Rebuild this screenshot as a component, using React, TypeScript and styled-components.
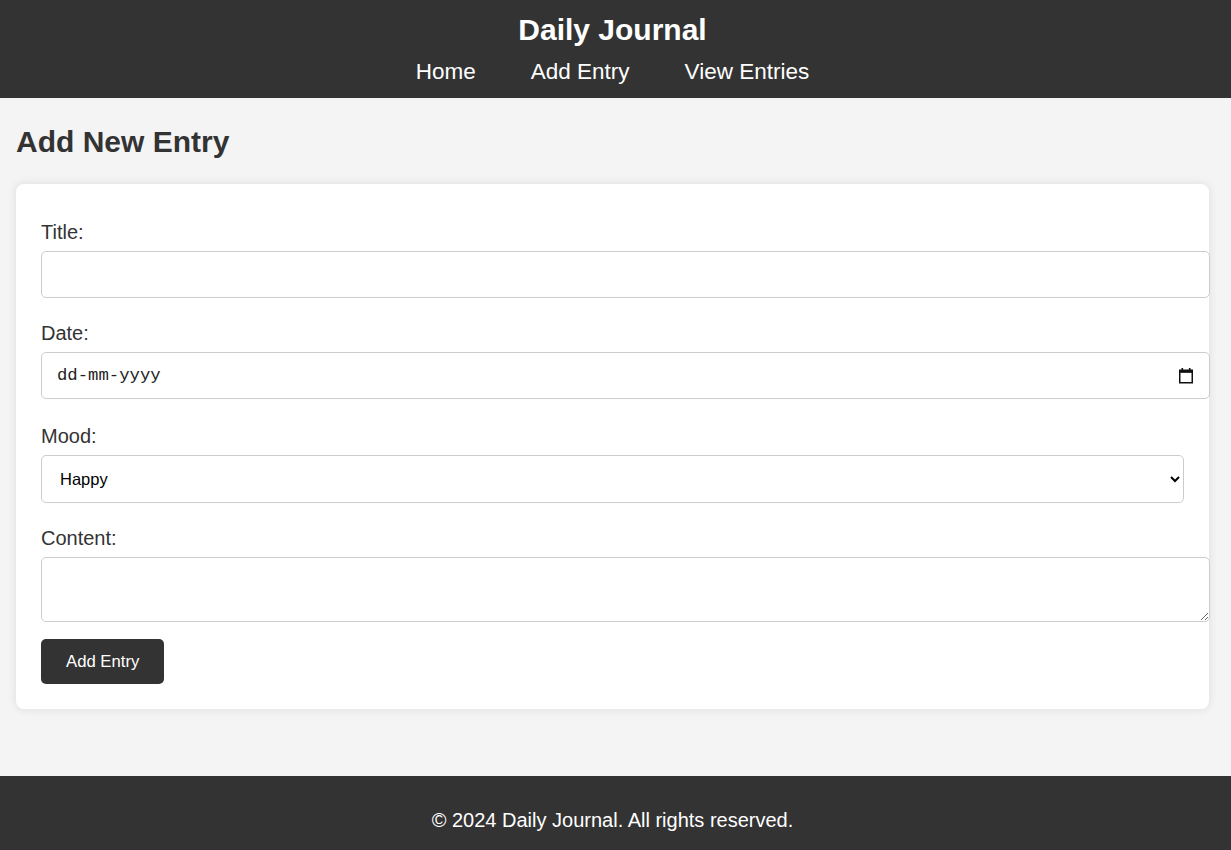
import * as React from 'react';
import styled, { createGlobalStyle } from 'styled-components';

const GlobalStyle = createGlobalStyle`
  body {
    margin: 0;
    background: #f4f4f4;
    font-family: "Liberation Sans", Arial, sans-serif;
    color: #333;
  }
`;

const Header = styled.header`
  background: #333;
  color: #fff;
  text-align: center;
  padding: 13px 6px 14px 0;
`;

const SiteTitle = styled.h1`
  margin: 0 0 12px;
  font-size: 30px;
  line-height: 34px;
  font-weight: bold;
`;

const Nav = styled.nav`
  display: flex;
  justify-content: center;
  gap: 55px;
`;

const NavLink = styled.a`
  color: #fff;
  text-decoration: none;
  font-size: 22.5px;
  line-height: 25px;
`;

const Main = styled.main`
  padding: 0 22px 67px 16px;
`;

const PageTitle = styled.h2`
  margin: 0;
  padding: 27px 0 25px;
  font-size: 30px;
  line-height: 34px;
  color: #333;
`;

const Card = styled.div`
  background: #fff;
  border-radius: 8px;
  box-shadow: 0 0 10px rgba(0, 0, 0, 0.1);
  padding: 37px 25px 25px;
`;

const Field = styled.div<{ $gap: number }>`
  margin-bottom: ${(p) => p.$gap}px;
`;

const Label = styled.label`
  display: block;
  font-size: 20px;
  line-height: 23px;
  color: #333;
  margin-bottom: 7px;
`;

const TextInput = styled.input`
  display: block;
  width: 100%;
  box-sizing: content-box;
  padding: 12px;
  height: 21px;
  border: 1px solid #ccc;
  border-radius: 5px;
  font-family: "Liberation Sans", Arial, sans-serif;
  font-size: 16.5px;
  margin: 0;
`;

const DateWrap = styled.div`
  position: relative;
  width: calc(100% + 26px);
`;

const DateInput = styled(TextInput)`
  width: calc(100% - 29px);
  padding-left: 15px;
  font-family: "Liberation Mono", "Courier New", monospace;
  font-size: 17.3px;
  &::placeholder {
    color: #222;
    opacity: 1;
  }
`;

const CalendarIcon = styled.svg`
  position: absolute;
  right: 17px;
  top: 16px;
`;

const Select = styled.select`
  display: block;
  width: 100%;
  height: 48px;
  padding: 0 12px 0 14px;
  border: 1px solid #ccc;
  border-radius: 5px;
  background: #fff;
  font-family: "Liberation Sans", Arial, sans-serif;
  font-size: 16.5px;
  color: #000;
`;

const TextArea = styled.textarea`
  display: block;
  width: 100%;
  box-sizing: content-box;
  height: 39px;
  padding: 12px;
  border: 1px solid #ccc;
  border-radius: 5px;
  font-family: "Liberation Sans", Arial, sans-serif;
  font-size: 16.5px;
  margin: 0;
`;

const Button = styled.button`
  background: #333;
  color: #fff;
  border: none;
  border-radius: 5px;
  padding: 0 25px;
  height: 45px;
  font-family: "Liberation Sans", Arial, sans-serif;
  font-size: 16.7px;
  cursor: pointer;
`;

const Footer = styled.footer`
  background: #333;
  color: #fff;
  text-align: center;
  padding: 33px 6px 19px 0;
  font-size: 20px;
  line-height: 23px;
`;

export default function App() {
  return (
    <>
      <GlobalStyle />
      <Header>
        <SiteTitle>Daily Journal</SiteTitle>
        <Nav>
          <NavLink href="#">Home</NavLink>
          <NavLink href="#">Add Entry</NavLink>
          <NavLink href="#">View Entries</NavLink>
        </Nav>
      </Header>
      <Main>
        <PageTitle>Add New Entry</PageTitle>
        <Card>
          <form onSubmit={(e) => e.preventDefault()}>
            <Field $gap={24}>
              <Label htmlFor="title">Title:</Label>
              <TextInput id="title" type="text" />
            </Field>
            <Field $gap={26}>
              <Label htmlFor="date">Date:</Label>
              <DateWrap>
                <DateInput id="date" type="text" placeholder="dd-mm-yyyy" />
                <CalendarIcon width="14" height="16" viewBox="0 0 14 16">
                  <rect x="2.5" y="0" width="1.6" height="3" fill="#111" />
                  <rect x="9.9" y="0" width="1.6" height="3" fill="#111" />
                  <rect x="0.75" y="2.25" width="12.5" height="12.5" fill="none" stroke="#111" strokeWidth="1.5" />
                  <rect x="0.75" y="2.25" width="12.5" height="2.6" fill="#111" />
                </CalendarIcon>
              </DateWrap>
            </Field>
            <Field $gap={24}>
              <Label htmlFor="mood">Mood:</Label>
              <Select id="mood" defaultValue="Happy">
                <option>Happy</option>
                <option>Sad</option>
                <option>Neutral</option>
                <option>Excited</option>
                <option>Angry</option>
              </Select>
            </Field>
            <Field $gap={17}>
              <Label htmlFor="content">Content:</Label>
              <TextArea id="content" />
            </Field>
            <Button type="submit">Add Entry</Button>
          </form>
        </Card>
      </Main>
      <Footer>© 2024 Daily Journal. All rights reserved.</Footer>
    </>
  );
}
